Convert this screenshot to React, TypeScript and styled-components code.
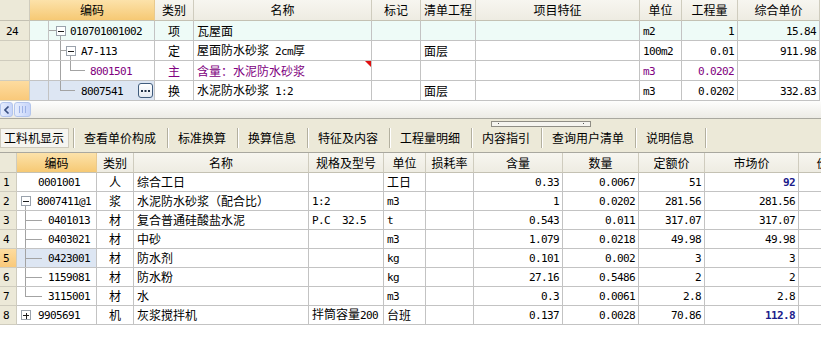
import React from 'react';
import styled, { createGlobalStyle } from 'styled-components';

const GlobalStyle = createGlobalStyle`
  html, body { margin: 0; padding: 0; background: #fff; overflow: hidden; }
  body {
    font-family: "Noto Sans CJK SC", "Noto Sans", sans-serif;
    font-size: 12px;
    color: #000;
  }
`;

const LINE = '#C3C3C3';
const BEIGE = '#ECE9D8';
const CYAN = '#EEFBF7';
const SELBLUE = '#DDE6F3';
const PURPLE = '#800080';
const NAVY = '#1B1B8A';

type Align = 'left' | 'center' | 'right';

const Page = styled.div`
  width: 821px;
  height: 341px;
  display: flex;
  flex-direction: column;
  overflow: hidden;
  background: #fff;
`;

const Grid = styled.div`
  display: flex;
  flex-direction: column;
  flex: none;
`;

const GridRow = styled.div<{ $cols: string; $h: number }>`
  display: grid;
  grid-template-columns: ${(p) => p.$cols};
  height: ${(p) => p.$h}px;
  flex: none;
`;

const Cell = styled.div<{
  $align?: Align;
  $bg?: string;
  $color?: string;
  $bold?: boolean;
  $pad?: number;
  $span?: number;
}>`
  box-sizing: border-box;
  border-right: 1px solid ${LINE};
  border-bottom: 1px solid ${LINE};
  display: flex;
  align-items: center;
  justify-content: ${(p) =>
    p.$align === 'center' ? 'center' : p.$align === 'right' ? 'flex-end' : 'flex-start'};
  padding: 0 ${(p) => (p.$pad ?? 3)}px;
  background: ${(p) => p.$bg ?? '#fff'};
  color: ${(p) => p.$color ?? '#000'};
  font-weight: ${(p) => (p.$bold ? 700 : 400)};
  grid-column: ${(p) => (p.$span ? `span ${p.$span}` : 'auto')};
  white-space: pre;
  overflow: hidden;
  position: relative;
  min-width: 0;
`;

const HeadCell = styled(Cell)<{ $kind?: 'corner' | 'active' | 'plain' }>`
  justify-content: center;
  background: ${(p) =>
    p.$kind === 'corner'
      ? BEIGE
      : p.$kind === 'active'
      ? 'linear-gradient(#FCE2AA, #F6C974)'
      : 'linear-gradient(#F7F6F0, #EEECE2)'};
  border-right-color: ${(p) => (p.$kind === 'active' ? '#E8C98E' : '#CFCCBE')};
  border-bottom-color: #C4C1B3;
`;

const RowHead = styled(Cell)<{ $active?: boolean }>`
  background: ${(p) => (p.$active ? 'linear-gradient(#FDDCA0, #F9C97A)' : BEIGE)};
  border-right-color: #CFCCBE;
  border-bottom-color: #CFCCBE;
`;

const Lat = styled.span`
  font-family: "DejaVu Sans Mono", "Liberation Mono", monospace;
  font-size: 11px;
  letter-spacing: -0.62px;
`;

const Txt = styled.span`
  white-space: pre;
  line-height: 14px;
`;

const FlagMark = styled.span`
  position: absolute;
  top: 0;
  right: 0;
  width: 0;
  height: 0;
  border-top: 6px solid #E01010;
  border-left: 6px solid transparent;
`;

const MoreButton = styled.div`
  flex: none;
  margin-left: auto;
  margin-right: 1px;
  width: 15px;
  height: 15px;
  box-sizing: border-box;
  border: 1px solid #3F5B7C;
  border-radius: 3px;
  background: linear-gradient(#FFFFFF, #E4EAF2);
  display: flex;
  align-items: center;
  justify-content: center;
`;

const TreeSvg = styled.svg`
  flex: none;
  display: block;
`;

const HScroll = styled.div`
  height: 18px;
  box-sizing: border-box;
  border-bottom: 1px solid #A9A89F;
  background: linear-gradient(#FEFEFD, #ECEBE5);
  display: flex;
  align-items: center;
  gap: 1px;
  flex: none;
`;

const ScrollBtn = styled.div<{ $w: number }>`
  width: ${(p) => p.$w}px;
  height: 15px;
  box-sizing: border-box;
  border: 1px solid #B3C5EC;
  border-radius: 3px;
  background: linear-gradient(90deg, #E6EDFD, #C6D4F9);
  display: flex;
  align-items: center;
  justify-content: center;
`;

const TabBar = styled.div`
  height: 34px;
  box-sizing: border-box;
  border-bottom: 1px solid #A9A89F;
  background: ${BEIGE};
  display: flex;
  flex-direction: column;
  flex: none;
`;

const Grip = styled.div`
  margin: 2px 0 0 491px;
  width: 100px;
  height: 6px;
  box-sizing: border-box;
  border: 1px solid #8F8D85;
  background: #F5F4EF;
  position: relative;
  &::before,
  &::after {
    content: '';
    position: absolute;
    top: 1px;
    width: 1px;
    height: 1px;
    background: #555;
  }
  &::before { left: 6px; }
  &::after { right: 6px; }
`;

const TabRow = styled.div`
  display: flex;
  height: 20px;
  margin-top: 1px;
`;

const SelTab = styled.div`
  width: 69px;
  box-sizing: border-box;
  border: 1px solid #CFCBBD;
  background: #F6F5F0;
  padding: 0 0 0 3px;
  margin-right: 4px;
  display: flex;
  align-items: center;
`;

const Tab = styled.div`
  padding: 0 11px 0 10px;
  display: flex;
  align-items: center;
`;

const Sep = styled.div`
  width: 1px;
  background: #B3B09F;
  box-shadow: 1px 0 0 #FFFFFF;
`;

function T({ s }: { s: string }) {
  const parts = s.split(/([\x20-\x7E]+)/).filter((p) => p !== '');
  return (
    <Txt>
      {parts.map((p, i) =>
        /^[\x20-\x7E]+$/.test(p) ? <Lat key={i}>{p}</Lat> : <span key={i}>{p}</span>
      )}
    </Txt>
  );
}

const LN = '#A3A3A3';

function TreeBox({ x, y, plus }: { x: number; y: number; plus?: boolean }) {
  return (
    <g shapeRendering="crispEdges">
      <rect x={x + 0.5} y={y + 0.5} width={9} height={9} fill="#FFFFFF" stroke="#9AA2AC" />
      <path d={`M${x + 2} ${y + 5.5}h6`} stroke="#1E1E1E" />
      {plus && <path d={`M${x + 5.5} ${y + 2.5}v6`} stroke="#1E1E1E" />}
    </g>
  );
}

function Tree({ w, h, children }: { w: number; h: number; children?: React.ReactNode }) {
  return (
    <TreeSvg width={w} height={h} viewBox={`0 0 ${w} ${h}`}>
      <g stroke={LN} fill="none" shapeRendering="crispEdges">
        {children}
      </g>
    </TreeSvg>
  );
}

const topTrees: Record<string, React.ReactNode> = {
  r0: (
    <Tree w={21} h={19}>
      <path d="M0 9.5H7M11.5 15V19" />
      <TreeBox x={7} y={5} />
    </Tree>
  ),
  r1: (
    <Tree w={32} h={19}>
      <path d="M11.5 0V19M11.5 9.5H17M21.5 15V19" />
      <TreeBox x={17} y={5} />
    </Tree>
  ),
  r2: (
    <Tree w={41} h={19}>
      <path d="M11.5 0V19M21.5 0V9.5H36" />
    </Tree>
  ),
  r3: (
    <Tree w={32} h={19}>
      <path d="M11.5 0V9.5H26" />
    </Tree>
  ),
};

const TOP_COLS = '30px 19px 106px 39px 178px 49px 55px 164px 42px 56px 82px';
const LOW_COLS = '17px 80px 37px 175px 75px 42px 48px 89px 76px 66px 94px 84px';

type TopRow = {
  num: string;
  tree: string;
  code: string;
  type: string;
  name: string;
  qd: string;
  unit: string;
  qty: string;
  price: string;
  bg?: string;
  color?: string;
  flag?: boolean;
  active?: boolean;
};

const topRows: TopRow[] = [
  { num: '24', tree: 'r0', code: '010701001002', type: '项', name: '瓦屋面', qd: '', unit: 'm2', qty: '1', price: '15.84', bg: CYAN },
  { num: '', tree: 'r1', code: 'A7-113', type: '定', name: '屋面防水砂浆 2cm厚', qd: '面层', unit: '100m2', qty: '0.01', price: '911.98' },
  { num: '', tree: 'r2', code: '8001501', type: '主', name: '含量：水泥防水砂浆', qd: '', unit: 'm3', qty: '0.0202', price: '', color: PURPLE, flag: true },
  { num: '', tree: 'r3', code: '8007541', type: '换', name: '水泥防水砂浆 1:2', qd: '面层', unit: 'm3', qty: '0.0202', price: '332.83', active: true },
];

type LowRow = {
  n: string;
  tree: 'none' | 'open' | 'mid' | 'last' | 'closed';
  code: string;
  type: string;
  name: string;
  spec: string;
  unit: string;
  amount: string;
  qty: string;
  base: string;
  market: string;
  strong?: boolean;
  active?: boolean;
};

const lowRows: LowRow[] = [
  { n: '1', tree: 'none', code: '0001001', type: '人', name: '综合工日', spec: '', unit: '工日', amount: '0.33', qty: '0.0067', base: '51', market: '92', strong: true },
  { n: '2', tree: 'open', code: '8007411@1', type: '浆', name: '水泥防水砂浆（配合比）', spec: '1:2', unit: 'm3', amount: '1', qty: '0.0202', base: '281.56', market: '281.56' },
  { n: '3', tree: 'mid', code: '0401013', type: '材', name: '复合普通硅酸盐水泥', spec: 'P.C  32.5', unit: 't', amount: '0.543', qty: '0.011', base: '317.07', market: '317.07' },
  { n: '4', tree: 'mid', code: '0403021', type: '材', name: '中砂', spec: '', unit: 'm3', amount: '1.079', qty: '0.0218', base: '49.98', market: '49.98' },
  { n: '5', tree: 'mid', code: '0423001', type: '材', name: '防水剂', spec: '', unit: 'kg', amount: '0.101', qty: '0.002', base: '3', market: '3', active: true },
  { n: '6', tree: 'mid', code: '1159081', type: '材', name: '防水粉', spec: '', unit: 'kg', amount: '27.16', qty: '0.5486', base: '2', market: '2' },
  { n: '7', tree: 'last', code: '3115001', type: '材', name: '水', spec: '', unit: 'm3', amount: '0.3', qty: '0.0061', base: '2.8', market: '2.8' },
  { n: '8', tree: 'closed', code: '9905691', type: '机', name: '灰浆搅拌机', spec: '拌筒容量200', unit: '台班', amount: '0.137', qty: '0.0028', base: '70.86', market: '112.8', strong: true },
];

function lowTree(kind: LowRow['tree']) {
  switch (kind) {
    case 'open':
      return (
        <Tree w={20} h={18}>
          <path d="M8.5 14V18" />
          <TreeBox x={4} y={4} />
        </Tree>
      );
    case 'closed':
      return (
        <Tree w={21} h={18}>
          <TreeBox x={4} y={4} plus />
        </Tree>
      );
    case 'mid':
      return (
        <Tree w={31} h={18}>
          <path d="M8.5 0V18M8.5 9.5H25" />
        </Tree>
      );
    case 'last':
      return (
        <Tree w={31} h={18}>
          <path d="M8.5 0V9.5H25" />
        </Tree>
      );
    default:
      return <Tree w={21} h={18} />;
  }
}

const tabs = ['查看单价构成', '标准换算', '换算信息', '特征及内容', '工程量明细', '内容指引', '查询用户清单', '说明信息'];

function DotsIcon() {
  return (
    <svg width="11" height="5" viewBox="0 0 11 5">
      <rect x="1" y="2" width="2" height="2" fill="#1E2F45" />
      <rect x="4.5" y="2" width="2" height="2" fill="#1E2F45" />
      <rect x="8" y="2" width="2" height="2" fill="#1E2F45" />
    </svg>
  );
}

export default function App() {
  return (
    <>
      <GlobalStyle />
      <Page>
        <Grid>
          <GridRow $cols={TOP_COLS} $h={21}>
            <HeadCell $kind="corner" />
            <HeadCell $kind="active" $span={2}><T s="编码" /></HeadCell>
            <HeadCell><T s="类别" /></HeadCell>
            <HeadCell><T s="名称" /></HeadCell>
            <HeadCell><T s="标记" /></HeadCell>
            <HeadCell><T s="清单工程" /></HeadCell>
            <HeadCell><T s="项目特征" /></HeadCell>
            <HeadCell><T s="单位" /></HeadCell>
            <HeadCell><T s="工程量" /></HeadCell>
            <HeadCell><T s="综合单价" /></HeadCell>
          </GridRow>
          {topRows.map((r, i) => {
            const bg = r.bg ?? '#fff';
            const codeBg = r.active ? SELBLUE : bg;
            return (
              <GridRow key={i} $cols={TOP_COLS} $h={20}>
                <RowHead $active={r.active} $pad={6}><T s={r.num} /></RowHead>
                <Cell $bg={codeBg} />
                <Cell $bg={codeBg} $pad={0} $color={r.color}>
                  {topTrees[r.tree]}
                  <T s={r.code} />
                  {r.active && (
                    <MoreButton>
                      <DotsIcon />
                    </MoreButton>
                  )}
                </Cell>
                <Cell $bg={bg} $align="center" $color={r.color}><T s={r.type} /></Cell>
                <Cell $bg={bg} $color={r.color}>
                  <T s={r.name} />
                  {r.flag && <FlagMark />}
                </Cell>
                <Cell $bg={bg} />
                <Cell $bg={bg}><T s={r.qd} /></Cell>
                <Cell $bg={bg} />
                <Cell $bg={bg} $color={r.color}><T s={r.unit} /></Cell>
                <Cell $bg={bg} $align="right" $color={r.color}><T s={r.qty} /></Cell>
                <Cell $bg={bg} $align="right"><T s={r.price} /></Cell>
              </GridRow>
            );
          })}
        </Grid>

        <HScroll>
          <ScrollBtn $w={13}>
            <svg width="6" height="8" viewBox="0 0 6 8">
              <path d="M4.5 0.5L1 4l3.5 3.5" stroke="#3A5082" strokeWidth="1.6" fill="none" />
            </svg>
          </ScrollBtn>
          <ScrollBtn $w={17}>
            <svg width="7" height="7" viewBox="0 0 7 7">
              <path d="M0.5 0v7M3.5 0v7M6.5 0v7" stroke="#9DB2E6" />
            </svg>
          </ScrollBtn>
        </HScroll>

        <TabBar>
          <Grip />
          <TabRow>
            <SelTab><T s="工料机显示" /></SelTab>
            <Sep />
            {tabs.map((t) => (
              <React.Fragment key={t}>
                <Tab><T s={t} /></Tab>
                <Sep />
              </React.Fragment>
            ))}
          </TabRow>
        </TabBar>

        <Grid>
          <GridRow $cols={LOW_COLS} $h={20}>
            <HeadCell $kind="corner" />
            <HeadCell $kind="active"><T s="编码" /></HeadCell>
            <HeadCell><T s="类别" /></HeadCell>
            <HeadCell><T s="名称" /></HeadCell>
            <HeadCell><T s="规格及型号" /></HeadCell>
            <HeadCell><T s="单位" /></HeadCell>
            <HeadCell><T s="损耗率" /></HeadCell>
            <HeadCell><T s="含量" /></HeadCell>
            <HeadCell><T s="数量" /></HeadCell>
            <HeadCell><T s="定额价" /></HeadCell>
            <HeadCell><T s="市场价" /></HeadCell>
            <HeadCell><T s="价格来源" /></HeadCell>
          </GridRow>
          {lowRows.map((r) => (
            <GridRow key={r.n} $cols={LOW_COLS} $h={19}>
              <RowHead $active={r.active}><T s={r.n} /></RowHead>
              <Cell $pad={0} $bg={r.active ? SELBLUE : '#fff'}>
                {lowTree(r.tree)}
                <T s={r.code} />
              </Cell>
              <Cell $align="center"><T s={r.type} /></Cell>
              <Cell><T s={r.name} /></Cell>
              <Cell><T s={r.spec} /></Cell>
              <Cell><T s={r.unit} /></Cell>
              <Cell />
              <Cell $align="right"><T s={r.amount} /></Cell>
              <Cell $align="right"><T s={r.qty} /></Cell>
              <Cell $align="right"><T s={r.base} /></Cell>
              <Cell $align="right" $bold={r.strong} $color={r.strong ? NAVY : '#000'}>
                <T s={r.market} />
              </Cell>
              <Cell />
            </GridRow>
          ))}
        </Grid>
      </Page>
    </>
  );
}
